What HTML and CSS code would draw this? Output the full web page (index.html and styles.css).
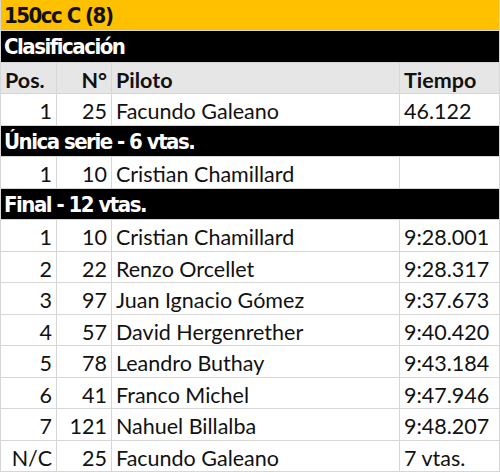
FILE: index.html
```html
<!DOCTYPE html>
<html>
<head>
<meta charset="utf-8">
<link rel="stylesheet" href="styles.css">
</head>
<body>
<div class="sheet">
  <div class="band band-yellow">150cc C (8)</div>
  <div class="band band-black">Clasificación</div>
  <div class="cell head num pos">Pos.</div>
  <div class="cell head num">N°</div>
  <div class="cell head">Piloto</div>
  <div class="cell head">Tiempo</div>

  <div class="cell num">1</div><div class="cell num">25</div><div class="cell">Facundo Galeano</div><div class="cell">46.122</div>

  <div class="band band-black">Única serie - 6 vtas.</div>
  <div class="cell num">1</div><div class="cell num">10</div><div class="cell">Cristian Chamillard</div><div class="cell"></div>

  <div class="band band-black">Final - 12 vtas.</div>
  <div class="cell num">1</div><div class="cell num">10</div><div class="cell">Cristian Chamillard</div><div class="cell">9:28.001</div>
  <div class="cell num">2</div><div class="cell num">22</div><div class="cell">Renzo Orcellet</div><div class="cell">9:28.317</div>
  <div class="cell num">3</div><div class="cell num">97</div><div class="cell">Juan Ignacio Gómez</div><div class="cell">9:37.673</div>
  <div class="cell num">4</div><div class="cell num">57</div><div class="cell">David Hergenrether</div><div class="cell">9:40.420</div>
  <div class="cell num">5</div><div class="cell num">78</div><div class="cell">Leandro Buthay</div><div class="cell">9:43.184</div>
  <div class="cell num">6</div><div class="cell num">41</div><div class="cell">Franco Michel</div><div class="cell">9:47.946</div>
  <div class="cell num">7</div><div class="cell num">121</div><div class="cell">Nahuel Billalba</div><div class="cell">9:48.207</div>
  <div class="cell num">N/C</div><div class="cell num">25</div><div class="cell">Facundo Galeano</div><div class="cell">7 vtas.</div>
</div>
</body>
</html>
```
FILE: styles.css
```css
html, body {
  margin: 0;
  padding: 0;
  background: #ffffff;
}
.sheet {
  width: 500px;
  height: 472px;
  box-sizing: border-box;
  display: grid;
  grid-template-columns: 55px 54px 287px 1fr;
  grid-template-rows: repeat(15, 1fr);
  gap: 1px;
  padding: 0 1px 1px 1px;
  background: #d6d6d6;
  font-family: Lato, "Liberation Sans", sans-serif;
  font-size: 21.5px;
  color: #111;
}
.cell {
  background: #ffffff;
  display: flex;
  align-items: flex-end;
  padding: 0 4px 2px 4px;
  line-height: 1;
  white-space: nowrap;
  overflow: hidden;
}
.num {
  justify-content: flex-end;
}
.head {
  background: #e7e6e6;
  font-weight: bold;
}
.head.pos {
  justify-content: flex-start;
}
.band {
  grid-column: 1 / -1;
  display: flex;
  align-items: center;
  padding: 0 3px;
  font-family: "DejaVu Sans Condensed", "DejaVu Sans", sans-serif;
  font-stretch: condensed;
  font-weight: bold;
  font-size: 22px;
  letter-spacing: -1.5px;
  white-space: nowrap;
}
.band-yellow {
  background: #ffc000;
  color: #111;
}
.band-black {
  background: #000000;
  color: #ffffff;
}
```
